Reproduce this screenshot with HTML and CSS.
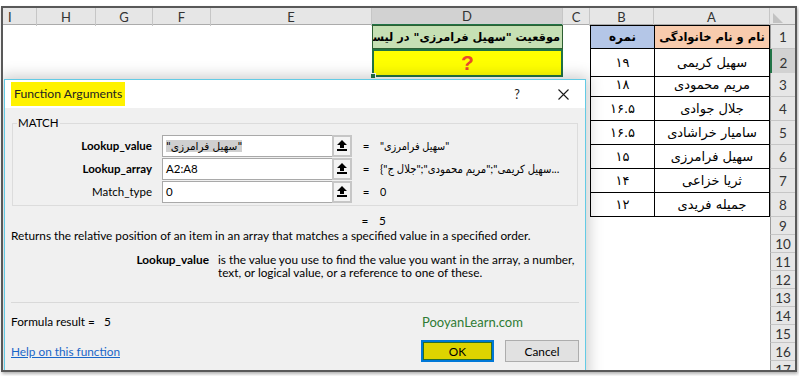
FILE: index.html
```html
<!DOCTYPE html>
<html lang="en">
  <head>
    <meta charset="UTF-8" />
    <title>Function Arguments - MATCH</title>
    <link rel="stylesheet" href="styles.css">
  </head>
  <body>
    <div class="frame">
      <div class="sheet">
        <div class="row head">
          <div class="ch">I</div>
          <div class="ch">H</div>
          <div class="ch">G</div>
          <div class="ch">F</div>
          <div class="ch">E</div>
          <div class="ch sel">D</div>
          <div class="ch">C</div>
          <div class="ch">B</div>
          <div class="ch">A</div>
          <div class="ch corner">
            <svg width="11" height="11" viewBox="0 0 11 11"><polygon points="0,0 0,10 10,10" fill="#c2c2c2"/></svg>
          </div>
        </div>

        <div class="row r">
          <div class="blank"></div>
          <div class="cell d1" dir="rtl">موقعیت "سهیل فرامرزی" در لیست</div>
          <div></div>
          <div class="cell top b1" dir="rtl">نمره</div>
          <div class="cell top a a1" dir="rtl">نام و نام خانوادگی</div>
          <div class="rh">1</div>
        </div>

        <div class="row r">
          <div class="blank"></div>
          <div class="cell d2">?<span class="handle"></span></div>
          <div></div>
          <div class="cell">۱۹</div>
          <div class="cell a" dir="rtl">سهیل کریمی</div>
          <div class="rh sel">2</div>
        </div>

        <div class="row r">
          <div class="blank"></div><div></div><div></div>
          <div class="cell">۱۸</div>
          <div class="cell a" dir="rtl">مریم محمودی</div>
          <div class="rh">3</div>
        </div>

        <div class="row r">
          <div class="blank"></div><div></div><div></div>
          <div class="cell">۱۶.۵</div>
          <div class="cell a" dir="rtl">جلال جوادی</div>
          <div class="rh">4</div>
        </div>

        <div class="row r">
          <div class="blank"></div><div></div><div></div>
          <div class="cell">۱۶.۵</div>
          <div class="cell a" dir="rtl">سامیار خراشادی</div>
          <div class="rh">5</div>
        </div>

        <div class="row r">
          <div class="blank"></div><div></div><div></div>
          <div class="cell">۱۵</div>
          <div class="cell a" dir="rtl">سهیل فرامرزی</div>
          <div class="rh">6</div>
        </div>

        <div class="row r">
          <div class="blank"></div><div></div><div></div>
          <div class="cell">۱۴</div>
          <div class="cell a" dir="rtl">ثریا خزاعی</div>
          <div class="rh">7</div>
        </div>

        <div class="row r">
          <div class="blank"></div><div></div><div></div>
          <div class="cell">۱۲</div>
          <div class="cell a" dir="rtl">جمیله فریدی</div>
          <div class="rh">8</div>
        </div>

        <div class="row s"><div class="empty"></div><div class="rh">9</div></div>
        <div class="row s"><div class="empty"></div><div class="rh">10</div></div>
        <div class="row s"><div class="empty"></div><div class="rh">11</div></div>
        <div class="row s"><div class="empty"></div><div class="rh">12</div></div>
        <div class="row s"><div class="empty"></div><div class="rh">13</div></div>
        <div class="row s"><div class="empty"></div><div class="rh">14</div></div>
        <div class="row s"><div class="empty"></div><div class="rh">15</div></div>
        <div class="row s"><div class="empty"></div><div class="rh">16</div></div>
        <div class="row s"><div class="empty"></div><div class="rh">17</div></div>
      </div>

      <!-- Function Arguments dialog over the sheet -->
      <div class="dialog">
        <div class="titlebar">
          <span class="title">Function Arguments</span>
          <span class="help">?</span>
          <span class="close">
            <svg width="11" height="11" viewBox="0 0 11 11"><path d="M0.5 0.5 L10.5 10.5 M10.5 0.5 L0.5 10.5" stroke="#1a1a1a" stroke-width="1.1"/></svg>
          </span>
        </div>

        <div class="body">
          <fieldset class="group">
            <legend>MATCH</legend>

            <div class="arg">
              <label class="req">Lookup_value</label>
              <div class="field">
                <span class="input"><span class="hl">"سهیل فرامرزی"</span></span>
                <span class="pick"><svg width="10" height="11" viewBox="0 0 10 11"><polygon points="5,0 10,5 7,5 7,8 3,8 3,5 0,5" fill="#000"/><rect x="0" y="9" width="10" height="2" fill="#000"/></svg></span>
              </div>
              <span class="eq">=</span>
              <span class="val">"سهیل فرامرزی"</span>
            </div>

            <div class="arg">
              <label class="req">Lookup_array</label>
              <div class="field">
                <span class="input">A2:A8</span>
                <span class="pick"><svg width="10" height="11" viewBox="0 0 10 11"><polygon points="5,0 10,5 7,5 7,8 3,8 3,5 0,5" fill="#000"/><rect x="0" y="9" width="10" height="2" fill="#000"/></svg></span>
              </div>
              <span class="eq">=</span>
              <span class="val long">{"سهیل کریمی";"مریم محمودی";"جلال ج...</span>
            </div>

            <div class="arg">
              <label>Match_type</label>
              <div class="field">
                <span class="input">0</span>
                <span class="pick"><svg width="10" height="11" viewBox="0 0 10 11"><polygon points="5,0 10,5 7,5 7,8 3,8 3,5 0,5" fill="#000"/><rect x="0" y="9" width="10" height="2" fill="#000"/></svg></span>
              </div>
              <span class="eq">=</span>
              <span class="val">0</span>
            </div>
          </fieldset>

          <div class="result">
            <span class="eq">=</span>
            <span class="val">5</span>
          </div>

          <p class="desc">Returns the relative position of an item in an array that matches a specified value in a specified order.</p>

          <div class="argdesc">
            <b>Lookup_value</b>
            <span>is the value you use to find the value you want in the array, a number,<br>text, or logical value, or a reference to one of these.</span>
          </div>

          <hr class="sep">

          <div class="formula">
            <span>Formula result =&nbsp;&nbsp;&nbsp;5</span>
            <span class="brand">PooyanLearn.com</span>
          </div>

          <div class="footer">
            <a href="#" class="link">Help on this function</a>
            <div class="buttons">
              <button class="btn ok">OK</button>
              <button class="btn">Cancel</button>
            </div>
          </div>
        </div>
      </div>
    </div>
  </body>
</html>
```

FILE: styles.css
```css
* {
  box-sizing: border-box;
}

body {
  margin: 0;
  width: 799px;
  height: 376px;
  overflow: hidden;
  background-color: #fff;
  font-family: Lato, "DejaVu Sans Condensed", "DejaVu Sans", sans-serif;
}

.frame {
  position: relative;
  width: 796px;
  height: 366px;
  margin: 6px 0 0 1px;
  border: 2px solid #595959;
  overflow: hidden;
  box-shadow: 1px 2px 3px rgba(0, 0, 0, 0.3);
}

/* sheet */

.row {
  display: grid;
  grid-template-columns: 34px 59px 57px 58px 161px 191px 27px 64px 116px 25px;
}

.head {
  height: 17px;
  background-color: #e6e6e6;
  border-bottom: 1px solid #ababab;
}

.ch {
  display: flex;
  align-items: center;
  justify-content: center;
  border-right: 1px solid #c6c6c6;
  font-family: Lato, sans-serif;
  font-size: 13px;
  color: #333;
}

.ch:first-child {
  justify-content: flex-start;
  padding-left: 5px;
}

.ch.sel {
  background-color: #d2d2d2;
  border-bottom: 2px solid #217346;
}

.ch.corner {
  border-right: none;
  align-items: flex-end;
  justify-content: flex-start;
  padding: 0 0 2px 3px;
}

.r {
  height: 24px;
}

.s {
  height: 18px;
}

.blank {
  grid-column: 1 / 6;
}

.empty {
  grid-column: 1 / 10;
}

.cell {
  display: flex;
  align-items: center;
  justify-content: center;
  border-left: 1px solid #000;
  border-bottom: 1px solid #000;
  font-family: "DejaVu Sans", sans-serif;
  font-size: 13px;
  color: #000;
  white-space: nowrap;
  overflow: hidden;
}

.cell.top {
  border-top: 1px solid #000;
}

.cell.a {
  border-right: 1px solid #000;
}

.b1 {
  background-color: #b4c6e7;
  font-weight: bold;
  font-size: 12px;
}

.a1 {
  background-color: #f8cbad;
  font-weight: bold;
  font-size: 11.5px;
}

.d1 {
  justify-content: flex-start;
  padding-right: 2px;
  background-color: #c6e0b4;
  border: 1px solid #2e5f33;
  font-weight: bold;
  font-size: 11.3px;
}

.d2 {
  position: relative;
  overflow: visible;
  background-color: #ffff00;
  border: 2px solid #217346;
  color: #ea4a2e;
  font-family: "Liberation Sans", sans-serif;
  font-weight: bold;
  font-size: 21px;
}

.handle {
  position: absolute;
  left: -4px;
  bottom: -4px;
  width: 6px;
  height: 6px;
  background-color: #217346;
  border: 1px solid #fff;
}

.rh {
  display: flex;
  align-items: center;
  justify-content: center;
  background-color: #e6e6e6;
  border-left: 1px solid #9b9b9b;
  border-bottom: 1px solid #c6c6c6;
  font-family: Lato, sans-serif;
  font-size: 13.5px;
  color: #333;
}

.rh.sel {
  background-color: #d2d2d2;
  border-left: 2px solid #217346;
}

/* dialog */

.dialog {
  position: absolute;
  left: 1px;
  top: 71px;
  width: 582px;
  height: 300px;
  background-color: #f0f0f0;
  border: 1px solid #63cbe5;
  box-shadow: 0 0 14px 3px rgba(0, 0, 0, 0.2);
  font-size: 11px;
  color: #000;
}

.titlebar {
  display: flex;
  align-items: center;
  height: 28px;
  background-color: #fff;
}

.title {
  height: 24px;
  line-height: 24px;
  margin-left: 6px;
  padding: 0 3px;
  background-color: #fff200;
  font-size: 12.2px;
  color: #222;
}

.help {
  margin-left: auto;
  width: 10px;
  text-align: center;
  font-size: 12.5px;
  color: #222;
}

.close {
  display: flex;
  margin: 0 16px 0 36px;
}

.body {
  padding: 0 6px;
}

.group {
  margin: 7px 1px 0;
  padding: 3px 0 2px 0;
  border: 1px solid #dcdcdc;
}

.group legend {
  margin-left: 4px;
  padding: 0 1px;
  line-height: 16px;
  font-size: 11.5px;
}

.arg,
.result {
  display: grid;
  grid-template-columns: 139px 190px 8px 1fr;
  column-gap: 10px;
  align-items: center;
}

.arg {
  height: 23px;
  font-size: 11.5px;
}

.arg label {
  text-align: right;
}

.arg label.req {
  font-weight: bold;
}

.field {
  display: flex;
  height: 22px;
  border: 1px solid #a9a9a9;
  background-color: #fff;
}

.input {
  flex: 1;
  padding: 0 3px;
  line-height: 20px;
  white-space: nowrap;
  overflow: hidden;
}

.hl {
  background-color: #cfcfcf;
  font-family: "DejaVu Sans", sans-serif;
  font-size: 10.5px;
}

.pick {
  display: flex;
  align-items: center;
  justify-content: center;
  width: 20px;
  background-color: #f4f4f4;
  border: 2px solid #c6c6c6;
  margin: -1px -1px -1px 0;
}

.eq {
  text-align: center;
}

.val {
  white-space: nowrap;
  overflow: hidden;
  font-size: 10.8px;
}

.val.long {
  font-size: 11.2px;
}

.result {
  height: 16px;
  margin: 6px 1px 0;
  font-size: 11.8px;
}

.result .eq {
  grid-column: 3;
}

.result .val {
  font-size: 11.8px;
}

.desc {
  margin: 0;
  line-height: 16px;
  font-size: 11.8px;
  white-space: nowrap;
}

.argdesc {
  display: grid;
  grid-template-columns: 198px 1fr;
  column-gap: 9px;
  margin-top: 9px;
  line-height: 13px;
  font-size: 11.8px;
}

.argdesc b {
  text-align: right;
}

.argdesc span {
  white-space: nowrap;
}

.sep {
  margin: 23px 0 0;
  border: none;
  border-top: 1px solid #d9d9d9;
  height: 0;
}

.formula {
  display: grid;
  grid-template-columns: 411px 1fr;
  margin-top: 11px;
  line-height: 16px;
  font-size: 11.8px;
}

.brand {
  font-size: 13px;
  color: #2e7b34;
}

.footer {
  display: flex;
  align-items: center;
  margin-top: 10px;
  font-size: 11.8px;
}

.link {
  color: #1a66c8;
  text-decoration: underline;
}

.buttons {
  display: flex;
  gap: 11px;
  margin-left: auto;
}

.btn {
  width: 74px;
  height: 22px;
  padding: 0;
  background-color: #e1e1e1;
  border: 1px solid #adadad;
  font-family: Lato, sans-serif;
  font-size: 11.8px;
  color: #000;
}

.btn.ok {
  width: 73px;
  background-color: #ded400;
  border: 2px solid #0078d7;
  box-shadow: inset 0 0 0 1px #2a6e2a;
}
```
